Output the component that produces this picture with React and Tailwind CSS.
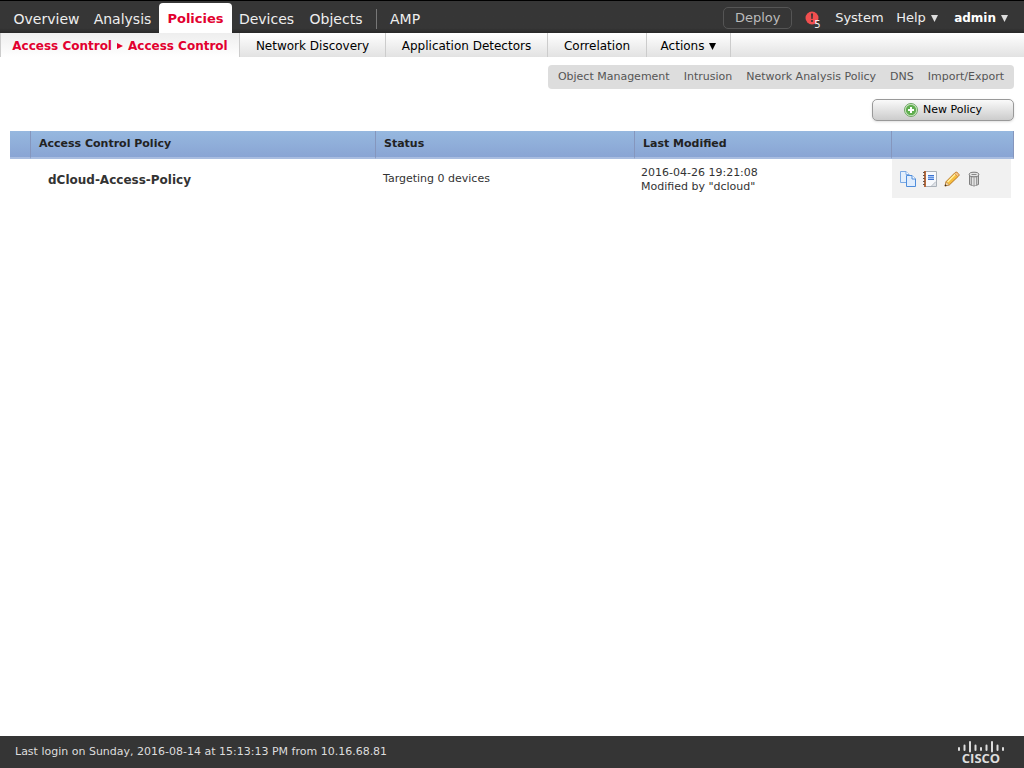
const tabs = [
  { name: "Overview", width: "w-[79px]" },
  { name: "Analysis", width: "w-[73px]" },
  { name: "Policies", width: "w-[73px]", active: true },
  { name: "Devices", width: "w-[69px]" },
  { name: "Objects", width: "w-[70px]" },
];

const subTabs = [
  { name: "Network Discovery", width: "w-[146px]" },
  { name: "Application Detectors", width: "w-[162px]" },
  { name: "Correlation", width: "w-[99px]" },
];

const shortcuts = [
  "Object Management",
  "Intrusion",
  "Network Analysis Policy",
  "DNS",
  "Import/Export",
];

function Caret({ className }) {
  return (
    <svg viewBox="0 0 8 8" className={className} fill="currentColor" aria-hidden="true">
      <path d="M0 0h8L4 8z" />
    </svg>
  );
}

function CopyIcon() {
  return (
    <svg width="16" height="16" viewBox="0 0 16 16" aria-hidden="true">
      <path d="M.5.5h5.500l3 3v8H.5z" fill="#e3effc" stroke="#7aa9e4" />
      <path d="M6 .5v3h3" fill="#fff" stroke="#7aa9e4" />
      <path d="M6.500 4.500H12l3.500 3.500v7.500h-9z" fill="#e0edfd" stroke="#4f8ddb" />
      <path d="M12 4.500V8h3.500" fill="#fff" stroke="#4f8ddb" />
    </svg>
  );
}

function ReportIcon() {
  return (
    <svg width="16" height="16" viewBox="0 0 16 16" aria-hidden="true">
      <path d="M2.500.5h12v15h-12z" fill="#f7f9fc" stroke="#a9b0b8" />
      <path d="M10 15l4-4v4z" fill="#dfe3e8" />
      <path d="M9.500 15l4.500-4.500" stroke="#b2b8c0" />
      <path d="M2 0h2v16H2z" fill="#b5693c" />
      <path d="M1 1.500h2M1 4.500h2M1 7.500h2M1 10.500h2M1 13.500h2" stroke="#6e5647" />
      <path d="M6 4h6v5H6z" fill="#a9c6f4" />
      <path d="M6 4.500h6M6 8.500h6" stroke="#3c72cf" />
      <path d="M6 6.500h6" stroke="#5e92e2" />
    </svg>
  );
}

function PencilIcon() {
  return (
    <svg width="16" height="16" viewBox="0 0 16 16" aria-hidden="true">
      <path d="M1 15l1.200-4.500L11 1.700q1-1 2-.2l1.700 1.600q.8 1-.2 2L5.500 13.800z" fill="#f6bd3d" stroke="#b9741c" />
      <path d="M3.500 11L11.500 3" stroke="#fff0a5" strokeWidth="1.500" />
      <path d="M10.500 2.400l3.200 3.200 1-1q.7-.8 0-1.500L13 1.500q-.8-.7-1.500 0z" fill="#f7c58a" stroke="#c17f3a" strokeWidth=".6" />
      <path d="M1 15l1.200-4 3 2.800z" fill="#f8dfb4" stroke="#a97840" strokeWidth=".5" />
      <path d="M.7 15.300l.7-2 1.400 1.300z" fill="#222" />
    </svg>
  );
}

function TrashIcon() {
  return (
    <svg width="16" height="16" viewBox="0 0 16 16" aria-hidden="true">
      <path d="M3.500 3.500v10q4.500 3 9 0v-10z" fill="#c9c9c9" stroke="#808080" />
      <path d="M5.500 6v8M8 6.500v8M10.500 6v8" stroke="#9a9a9a" />
      <path d="M6.800 6.500v8M9.300 6.500v8" stroke="#ededed" />
      <ellipse cx="8" cy="3.500" rx="4.800" ry="2.300" fill="#e4e4e4" stroke="#777" />
      <path d="M5.500 3.500h5" stroke="#8a8a8a" />
    </svg>
  );
}

function AddIcon() {
  return (
    <svg width="14" height="14" viewBox="0 0 14 14" aria-hidden="true">
      <circle cx="7" cy="7" r="6.500" fill="#d5ebcb" stroke="#6da663" />
      <circle cx="7" cy="7" r="5.200" fill="#60ae50" />
      <path d="M7 4v6M4 7h6" stroke="#fff" strokeWidth="2" />
    </svg>
  );
}

function CiscoLogo() {
  return (
    <svg width="46" height="28" viewBox="0 0 46 28" role="img" aria-label="Cisco" fill="#ddd">
      <path
        d="M1 10v2M6.500 7.500v4.500M12 4v9.500M17.500 7.500v4.500M23 10v2M28.500 7.500v4.500M34 4v9.500M39.500 7.500v4.500M45 10v2"
        stroke="#ddd"
        strokeWidth="2"
        strokeLinecap="round"
      />
      <text x="23" y="25" textAnchor="middle" fontFamily="Open Sans, sans-serif" fontWeight="700" fontSize="13">
        CISCO
      </text>
    </svg>
  );
}

const actions = [
  { name: "Copy", Icon: CopyIcon },
  { name: "Report", Icon: ReportIcon },
  { name: "Edit", Icon: PencilIcon },
  { name: "Delete", Icon: TrashIcon },
];

export default function App() {
  return (
    <div className="flex min-h-screen flex-col bg-white font-['DejaVu_Sans',sans-serif] text-[11px] text-[#333]">
      {/* Main navigation */}
      <header className="flex h-[33px] items-end justify-between border-t border-black bg-linear-to-b from-[#363636] from-85% to-[#282828] text-[#eee]">
        <nav className="flex items-end pl-[7px] text-[14px]">
          {tabs.map((tab) => (
            <a
              key={tab.name}
              href="#"
              className={`${tab.width} flex h-[30px] items-center justify-center pt-[2px] whitespace-nowrap ${
                tab.active ? "rounded-t bg-white text-[13px] font-bold text-[#e2002f]" : ""
              }`}
            >
              {tab.name}
            </a>
          ))}
          <a href="#" className="mb-1 ml-[5px] flex h-5 items-center border-l border-[#777] pl-[13px]">
            AMP
          </a>
        </nav>
        <div className="flex h-[30px] items-center pr-4 text-[13px]">
          <button className="mr-[13px] h-[22px] w-[69px] rounded-[5px] border border-[#555] text-[13px] text-[#bbb]">
            Deploy
          </button>
          <a href="#" aria-label="5 alerts" className="relative mr-[15px] h-[14px] w-[15px]">
            <svg width="14" height="14" viewBox="0 0 14 14" aria-hidden="true">
              <circle cx="7" cy="7" r="6.500" fill="#f14f4f" />
              <path d="M6 2.500h2L7.600 8H6.400z" fill="#333" />
              <circle cx="7" cy="10" r="1.100" fill="#333" />
            </svg>
            <span className="absolute top-[8px] left-[9px] text-[10px] leading-3">5</span>
          </a>
          <a href="#" className="w-[61px]">System</a>
          <button className="flex w-[58px] items-center gap-[5px]">
            Help
            <Caret className="h-[7px] w-[7px] text-[#ddd]" />
          </button>
          <button className="flex items-center gap-[5px] text-[12px] font-bold text-white">
            admin
            <Caret className="h-[7px] w-[7px] text-[#ddd]" />
          </button>
        </div>
      </header>

      {/* Policies navigation */}
      <nav className="flex h-6 items-stretch border-l border-[#ccc] bg-linear-to-b from-white to-[#e2e2e2] text-[12px] text-black">
        <div className="flex w-[239px] items-center justify-center gap-[5px] border-r border-[#ccc] bg-linear-to-b from-[#eee] to-white pt-[2px] font-bold whitespace-nowrap text-[#e2002f]">
          <a href="#">Access Control</a>
          <svg width="6" height="6" viewBox="0 0 6 6" fill="currentColor" aria-hidden="true">
            <path d="M0 0l6 3-6 3z" />
          </svg>
          <a href="#">Access Control</a>
        </div>
        {subTabs.map((tab) => (
          <a
            key={tab.name}
            href="#"
            className={`${tab.width} flex items-center justify-center border-r border-[#ccc] pt-[2px] whitespace-nowrap`}
          >
            {tab.name}
          </a>
        ))}
        <button className="flex w-[84px] items-center justify-center gap-[5px] border-r border-[#ccc] pt-[2px]">
          Actions
          <Caret className="h-[7px] w-[7px]" />
        </button>
      </nav>

      <main className="flex-1 px-[10px] pt-2">
        <div className="flex flex-col items-end gap-[10px]">
          <nav className="flex h-6 items-center gap-[14px] rounded-[4px] bg-[#ddd] px-[10px] pt-px text-[#555]">
            {shortcuts.map((name) => (
              <a key={name} href="#">
                {name}
              </a>
            ))}
          </nav>
          <button className="flex h-[22px] w-[142px] items-center justify-center gap-[5px] rounded-[5px] border border-[#999] bg-linear-to-b from-[#fafafa] to-[#ccc] text-black shadow-sm">
            <AddIcon />
            New Policy
          </button>
        </div>

        <table className="mt-[10px] w-full table-fixed border-separate border-spacing-0 text-left">
          <colgroup>
            <col className="w-[21px]" />
            <col className="w-[345px]" />
            <col className="w-[259px]" />
            <col />
            <col className="w-[122px]" />
          </colgroup>
          <thead>
            <tr className="h-7 bg-linear-to-b from-[#96b8df] to-[#88a3d3] text-[#222]">
              <th className="border-r border-b-2 border-r-[#8596bd] border-b-[#a9bde0]" aria-label="Expand" />
              <th className="border-r border-b-2 border-r-[#8596bd] border-b-[#a9bde0] pt-px pl-2">Access Control Policy</th>
              <th className="border-r border-b-2 border-r-[#8596bd] border-b-[#a9bde0] pt-px pl-2">Status</th>
              <th className="border-r border-b-2 border-r-[#8596bd] border-b-[#a9bde0] pt-px pl-2">Last Modified</th>
              <th className="border-r border-b-2 border-r-[#8596bd] border-b-[#a9bde0]" aria-label="Actions" />
            </tr>
          </thead>
          <tbody>
            <tr className="h-[39px]">
              <td />
              <td className="pt-[2px] pl-[17px] text-[12px] font-bold">dCloud-Access-Policy</td>
              <td className="pt-[2px] pl-[7px]">Targeting 0 devices</td>
              <td className="pt-[2px] pl-[6px] leading-[14px]">
                2016-04-26 19:21:08
                <br />
                Modified by "dcloud"
              </td>
              <td className="pr-[3px]">
                <div className="flex h-[39px] items-center gap-[6px] bg-[#f1f1f1] pl-2">
                  {actions.map(({ name, Icon }) => (
                    <button key={name} aria-label={name}>
                      <Icon />
                    </button>
                  ))}
                </div>
              </td>
            </tr>
          </tbody>
        </table>
      </main>

      <footer className="flex h-8 items-center justify-between bg-[#353535] pr-5 pl-[15px] text-[#ddd]">
        <p>Last login on Sunday, 2016-08-14 at 15:13:13 PM from 10.16.68.81</p>
        <CiscoLogo />
      </footer>
    </div>
  );
}
